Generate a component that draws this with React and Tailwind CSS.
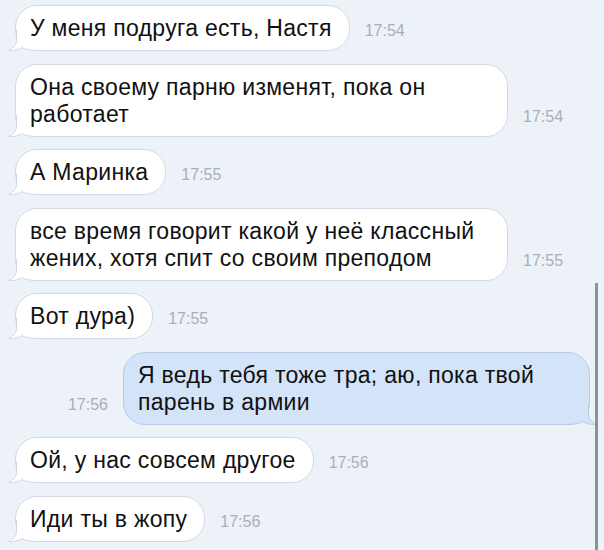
import React from 'react';

const messages = [
  { from: 'them', lines: ['У меня подруга есть, Настя'], time: '17:54' },
  { from: 'them', lines: ['Она своему парню изменят, пока он', 'работает'], time: '17:54', wide: true },
  { from: 'them', lines: ['А Маринка'], time: '17:55' },
  { from: 'them', lines: ['все время говорит какой у неё классный', 'жених, хотя спит со своим преподом'], time: '17:55', wide: true },
  { from: 'them', lines: ['Вот дура)'], time: '17:55' },
  { from: 'me', lines: ['Я ведь тебя тоже тра; аю, пока твой', 'парень в армии'], time: '17:56' },
  { from: 'them', lines: ['Ой, у нас совсем другое'], time: '17:56' },
  { from: 'them', lines: ['Иди ты в жопу'], time: '17:56' },
];

function Tail({ mine }) {
  const fill = mine ? '#d3e3f8' : '#ffffff';
  const stroke = mine ? '#b8cbe4' : '#d3d9e2';
  return (
    <svg
      width="32"
      height="22"
      viewBox="0 0 32 22"
      className={`absolute bottom-[-1px] ${mine ? 'right-[-8px] scale-x-[-1]' : 'left-[-8px]'}`}
    >
      <path d="M8 0 L8 12 C8 16 5 19.5 0.5 21.5 C6 22 11 20.5 14 18.5 C17 20.5 22 21 32 21 L32 0 Z" fill={fill} />
      <path
        d="M8.5 0 L8.5 12 C8.5 16 5 19.5 0.5 21.5 C6 22 11 20.5 14 18.5 C17 20.5 22 21.5 32 21.5"
        fill="none"
        stroke={stroke}
        strokeWidth="1"
      />
    </svg>
  );
}

function Bubble({ msg }) {
  const mine = msg.from === 'me';
  return (
    <div
      className={`relative rounded-[22px] border pl-[14px] pr-[17px] pt-[9px] pb-[8px] text-[23px] leading-[27px] tracking-[0.3px] text-[#111111] ${
        mine ? 'w-[467px] border-[#b8cbe4] bg-[#d3e3f8]' : 'border-[#d3d9e2] bg-white'
      } ${msg.wide ? 'w-[493px]' : ''}`}
    >
      <Tail mine={mine} />
      <div className="relative">
        {msg.lines.map((l, i) => (
          <div key={i} className="whitespace-nowrap">{l}</div>
        ))}
      </div>
    </div>
  );
}

function Time({ t }) {
  return <span className="mb-[8px] text-[16px] leading-[24px] text-[#a8afba]">{t}</span>;
}

export default function App() {
  return (
    <div className="relative h-[550px] w-[604px] overflow-hidden bg-[#edf1f8] pt-[5px] pl-[15px] pr-[14px] font-['Liberation_Sans',Arial,sans-serif]">
      {messages.map((m, i) =>
        m.from === 'me' ? (
          <div key={i} className="mb-[12.5px] flex items-end justify-end gap-[15px]">
            <Time t={m.time} />
            <Bubble msg={m} />
          </div>
        ) : (
          <div key={i} className="mb-[12.5px] flex items-end gap-[15px]">
            <Bubble msg={m} />
            <Time t={m.time} />
          </div>
        )
      )}
      {/* scroll indicator */}
      <div className="absolute left-[595px] top-[283px] h-[267px] w-[3px] bg-[#8d9198]" />
    </div>
  );
}
